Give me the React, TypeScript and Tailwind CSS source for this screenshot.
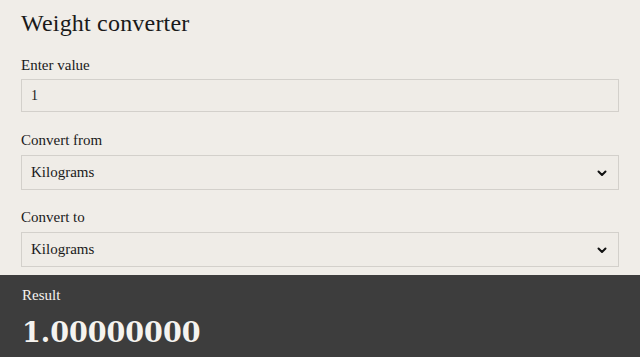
import { useState } from 'react'

const UNITS: Record<string, number> = {
  Kilograms: 1,
  Grams: 0.001,
  Pounds: 0.45359237,
  Ounces: 0.028349523125,
}

function Chevron() {
  return (
    <svg width="12" height="12" viewBox="0 0 24 24" fill="none" stroke="#111" strokeWidth="4" strokeLinecap="round" strokeLinejoin="round">
      <path d="M5 9l7 7 7-7" />
    </svg>
  )
}

function UnitSelect({ value, onChange }: { value: string; onChange: (v: string) => void }) {
  return (
    <div className="relative">
      <select
        value={value}
        onChange={e => onChange(e.target.value)}
        className="w-full h-[35px] appearance-none border border-[#d3d0cb] bg-[#efece7] pl-[9px] pr-8 text-[15px] text-[#1a1a1a] outline-none"
      >
        {Object.keys(UNITS).map(u => (
          <option key={u} value={u}>{u}</option>
        ))}
      </select>
      <span className="pointer-events-none absolute right-[11px] top-1/2 -translate-y-1/2 flex">
        <Chevron />
      </span>
    </div>
  )
}

export default function App() {
  const [value, setValue] = useState('1')
  const [from, setFrom] = useState('Kilograms')
  const [to, setTo] = useState('Kilograms')

  const num = parseFloat(value) || 0
  const result = (num * UNITS[from]) / UNITS[to]

  return (
    <div className="min-h-[357px] bg-[#f0ede8] flex flex-col" style={{ fontFamily: '"Liberation Serif", serif' }}>
      <main className="px-[21px] pt-[8px] pb-[8px] text-[#1a1a1a]">
        <h1 className="text-[24px] leading-[30px] tracking-[0.2px]">Weight converter</h1>

        <label className="block mt-[18px]">
          <span className="block text-[15px] leading-[18px] mb-[5px]">Enter value</span>
          <input
            value={value}
            onChange={e => setValue(e.target.value)}
            className="w-full h-[33px] border border-[#d3d0cb] bg-[#efece7] px-[9px] text-[14px] outline-none"
          />
        </label>

        <label className="block mt-[19px]">
          <span className="block text-[15px] leading-[18px] mb-[6px]">Convert from</span>
          <UnitSelect value={from} onChange={setFrom} />
        </label>

        <label className="block mt-[18px]">
          <span className="block text-[15px] leading-[18px] mb-[6px]">Convert to</span>
          <UnitSelect value={to} onChange={setTo} />
        </label>
      </main>

      <section className="flex-1 bg-[#3d3d3d] px-[22px] pt-[11px] pb-[8px] text-[#f5f3ef]">
        <div className="text-[15px] leading-[18px]">Result</div>
        <div className="mt-[14px] text-[27px] leading-[30px] font-bold" style={{ fontFamily: '"DejaVu Serif", serif' }}>
          {result.toFixed(8)}
        </div>
      </section>
    </div>
  )
}
